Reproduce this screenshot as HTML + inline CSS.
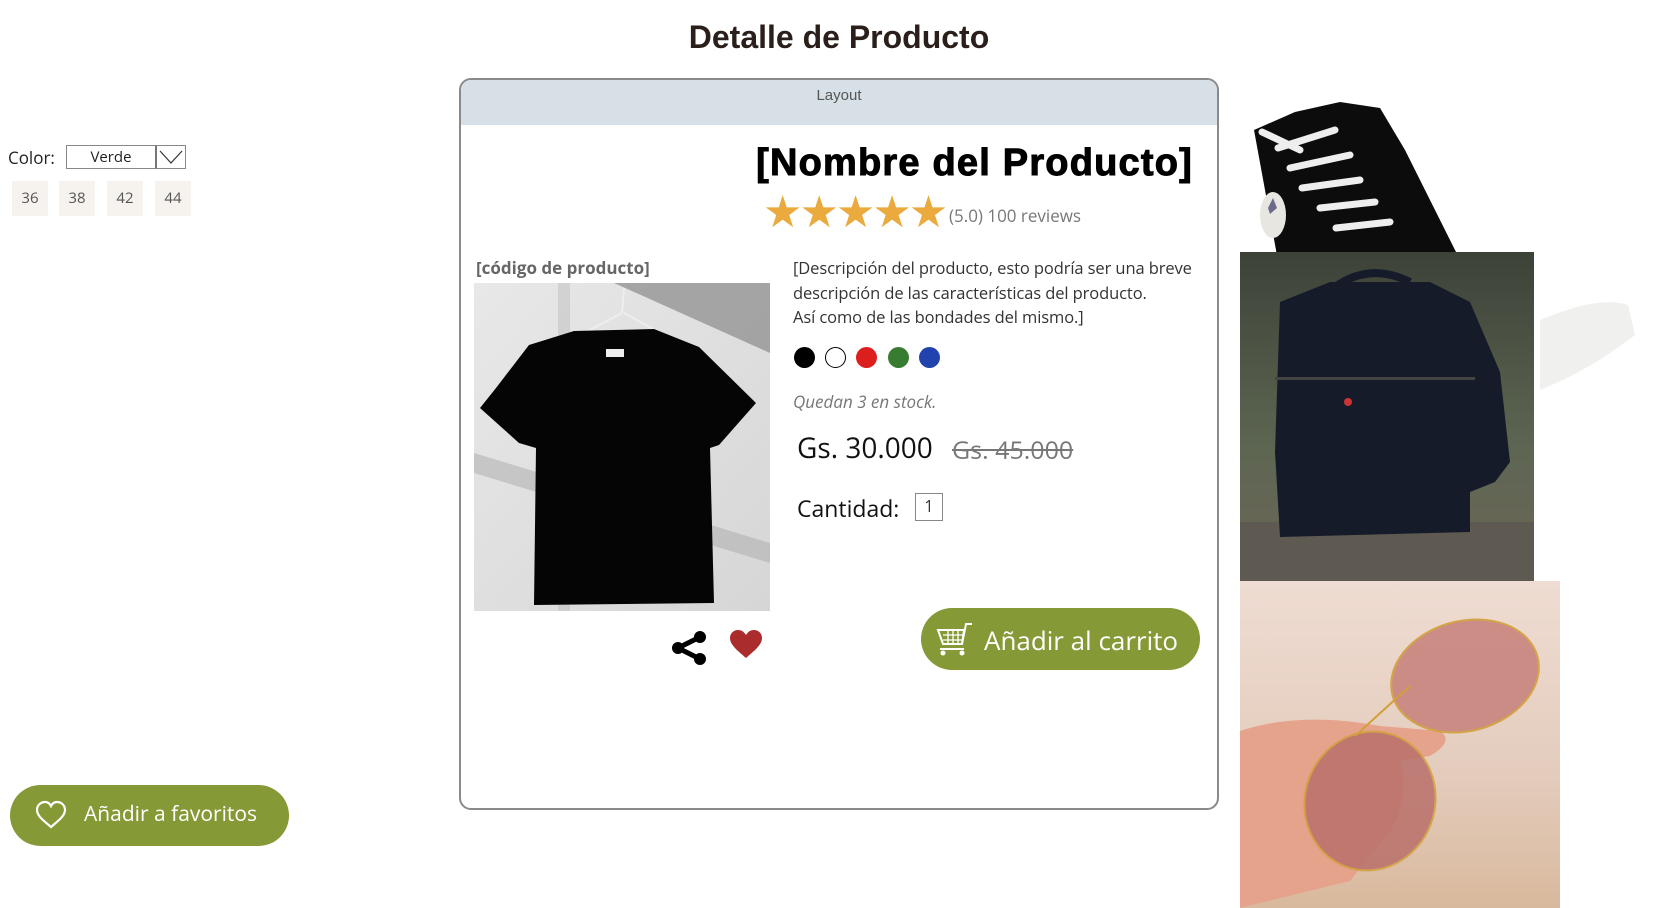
<!DOCTYPE html>
<html><head><meta charset="utf-8"><style>
*{margin:0;padding:0;box-sizing:border-box}
body{width:1663px;height:908px;background:#fff;position:relative;overflow:hidden;font-family:"Open Sans","Liberation Sans",sans-serif;color:#222}
.a{position:absolute;white-space:nowrap}
</style></head><body>
<div class="a" style="left:0;width:1678px;top:19px;text-align:center;font:bold 32px 'Liberation Sans',sans-serif;color:#2a1f1a">Detalle de Producto</div>

<div class="a" style="left:8px;top:146px;font-size:17px;color:#222">Color:</div>
<div class="a" style="left:66px;top:145px;width:120px;height:24px;border:1px solid #888;background:#fff"></div>
<div class="a" style="left:66px;top:147px;width:90px;text-align:center;font-size:15px;color:#222">Verde</div>
<div class="a" style="left:155px;top:145px;width:31px;height:24px;border:1px solid #888;border-left:2px solid #777"></div>
<svg class="a" style="left:158px;top:148px" width="26" height="18"><path d="M2 3 L13 15 L24 3" fill="none" stroke="#333" stroke-width="1.2"/></svg>
<div class="a" style="left:12px;top:181px;width:36px;height:35px;background:#f6f3ef;font-size:15px;color:#555;text-align:center;line-height:35px">36</div>
<div class="a" style="left:59px;top:181px;width:36px;height:35px;background:#f6f3ef;font-size:15px;color:#555;text-align:center;line-height:35px">38</div>
<div class="a" style="left:107px;top:181px;width:36px;height:35px;background:#f6f3ef;font-size:15px;color:#555;text-align:center;line-height:35px">42</div>
<div class="a" style="left:155px;top:181px;width:36px;height:35px;background:#f6f3ef;font-size:15px;color:#555;text-align:center;line-height:35px">44</div>

<div class="a" style="left:10px;top:785px;width:279px;height:61px;border-radius:31px;background:#859a36"></div>
<svg class="a" style="left:34px;top:800px" width="34" height="30" viewBox="0 0 34 30"><path d="M17 27 C10 21 3 16 3 10 C3 5 7 2 11 2 C14 2 16 4 17 6 C18 4 20 2 23 2 C27 2 31 5 31 10 C31 16 24 21 17 27Z" fill="none" stroke="#fff" stroke-width="2.2"/></svg>
<div class="a" style="left:84px;top:800px;font-size:21px;color:#fff">Añadir a favoritos</div>

<div class="a" style="left:459px;top:78px;width:760px;height:732px;border:2px solid #8a8a8a;border-radius:12px;overflow:hidden">
 <div style="height:45px;background:#d7e0e6;text-align:center;font:15px 'Liberation Sans',sans-serif;color:#555;padding-top:7px">Layout</div>
</div>
<div class="a" style="right:470px;top:142px;font:900 38px 'Liberation Sans',sans-serif;color:#000;letter-spacing:1.2px;-webkit-text-stroke:1px #000">[Nombre del Producto]</div>
<div class="a" style="left:763px;top:188px;font-size:44px;color:#eaaa3e;letter-spacing:-3px;line-height:44px">★★★★★</div>
<div class="a" style="left:949px;top:204px;font-size:17px;color:#777">(5.0) 100 reviews</div>
<div class="a" style="left:476px;top:256px;font-size:17px;font-weight:bold;color:#666">[código de producto]</div>

<svg class="a" style="left:474px;top:283px" width="296" height="328" viewBox="0 0 296 328">
<defs><linearGradient id="w" x1="0" y1="0" x2="1" y2="1"><stop offset="0" stop-color="#e8e8e8"/><stop offset="1" stop-color="#d6d6d6"/></linearGradient></defs>
<rect width="296" height="328" fill="url(#w)"/>
<polygon points="140,0 296,0 296,70" fill="#8a8a8a" opacity=".7"/>
<rect x="84" y="0" width="12" height="328" fill="#c4c4c4" opacity=".6"/>
<polygon points="0,170 296,260 296,280 0,190" fill="#aaa" opacity=".5"/>
<path d="M110 50 L148 30 L150 5 M150 30 L186 50" stroke="#eee" stroke-width="2" fill="none"/>
<polygon points="55,62 100,48 180,46 225,64 282,120 245,162 236,165 240,320 60,322 62,165 45,160 6,125 22,105" fill="#050505"/>
<rect x="132" y="66" width="18" height="8" fill="#eee"/>
</svg>

<div class="a" style="left:793px;top:256px;font-size:16.5px;line-height:24.5px;color:#333;white-space:normal;width:420px;letter-spacing:-0.1px">[Descripción del producto, esto podría ser una breve descripción de las características del producto.<br>Así como de las bondades del mismo.]</div>
<div class="a" style="left:794px;top:347px;width:21px;height:21px;border-radius:50%;background:#000"></div>
<div class="a" style="left:825px;top:347px;width:21px;height:21px;border-radius:50%;border:1.5px solid #000"></div>
<div class="a" style="left:856px;top:347px;width:21px;height:21px;border-radius:50%;background:#dd1e1e"></div>
<div class="a" style="left:888px;top:347px;width:21px;height:21px;border-radius:50%;background:#377c30"></div>
<div class="a" style="left:919px;top:347px;width:21px;height:21px;border-radius:50%;background:#2143ad"></div>
<div class="a" style="left:793px;top:390px;font-size:17px;font-style:italic;color:#777">Quedan 3 en stock.</div>
<div class="a" style="left:797px;top:429px;font-size:28px;color:#111">Gs. 30.000</div>
<div class="a" style="left:952px;top:433px;font-size:25px;color:#777;text-decoration:line-through">Gs. 45.000</div>
<div class="a" style="left:797px;top:492px;font-size:23px;color:#111">Cantidad:</div>
<div class="a" style="left:915px;top:493px;width:28px;height:28px;border:1.5px solid #888;font-size:16px;text-align:center;line-height:25px;color:#333">1</div>

<svg class="a" style="left:670px;top:630px" width="38" height="36" viewBox="0 0 38 36"><path d="M30 7 L8 18 L30 29" stroke="#000" stroke-width="5" fill="none"/><circle cx="30" cy="7" r="6" fill="#000"/><circle cx="8" cy="18" r="6" fill="#000"/><circle cx="30" cy="29" r="6" fill="#000"/></svg>
<svg class="a" style="left:729px;top:629px" width="34" height="30" viewBox="0 0 34 30"><path d="M17 29 C9 22 1 16 1 9 C1 4 5 1 9 1 C13 1 15 3 17 6 C19 3 21 1 25 1 C29 1 33 4 33 9 C33 16 25 22 17 29Z" fill="#ab2c2c"/></svg>

<div class="a" style="left:921px;top:608px;width:279px;height:62px;border-radius:31px;background:#859a36"></div>
<svg class="a" style="left:936px;top:620px" width="38" height="38" viewBox="0 0 38 38"><path d="M2 10 H28 L26 24 H7 Z" fill="none" stroke="#fff" stroke-width="2"/><path d="M7 15 H27 M7 20 H26 M12 10 V24 M17 10 V24 M22 10 V24" stroke="#fff" stroke-width="1.3"/><path d="M26 24 L30 4 H36 M4 29 H28" stroke="#fff" stroke-width="2" fill="none"/><circle cx="7" cy="33" r="2.5" fill="#fff"/><circle cx="26" cy="33" r="2.5" fill="#fff"/></svg>
<div class="a" style="left:984px;top:622px;font-size:26px;color:#fff">Añadir al carrito</div>

<svg class="a" style="left:1240px;top:90px" width="400" height="318" viewBox="0 0 400 318">
<path d="M14 40 L55 22 L100 12 L140 18 L165 60 L190 110 L215 160 L235 200 L40 200 L36 160 Z" fill="#0c0c0c"/>
<path d="M22 42 L60 60 M38 58 L95 40 M50 78 L110 65 M62 98 L120 90 M80 118 L135 112 M96 138 L150 132" stroke="#eee" stroke-width="7" fill="none" stroke-linecap="round"/>
<ellipse cx="33" cy="125" rx="13" ry="23" fill="#e8e6e0"/>
<path d="M28 118 L33 108 L37 118 L30 124 Z" fill="#6d6b8a"/>
<path d="M300 230 Q360 205 388 215 L395 245 Q350 280 300 300 Z" fill="#f0f0ee"/>
</svg>
<svg class="a" style="left:1240px;top:252px" width="294" height="329" viewBox="0 0 294 329">
<defs><linearGradient id="bg" x1="0" y1="0" x2="0" y2="1"><stop offset="0" stop-color="#3d4238"/><stop offset=".6" stop-color="#5d6652"/><stop offset="1" stop-color="#6e6558"/></linearGradient></defs>
<rect width="294" height="329" fill="url(#bg)"/>
<rect x="0" y="270" width="294" height="59" fill="#5e5a52"/>
<path d="M40 50 L90 30 L190 30 L230 50 L260 120 L270 210 L255 230 L230 240 L230 280 L40 285 L35 200 Z" fill="#161b2a"/>
<path d="M95 35 Q130 10 170 30" stroke="#161b2a" stroke-width="8" fill="none"/>
<rect x="35" y="125" width="200" height="3" fill="#444"/>
<circle cx="108" cy="150" r="4" fill="#c33"/>
</svg>
<svg class="a" style="left:1240px;top:581px" width="320" height="327" viewBox="0 0 320 327">
<defs><linearGradient id="sk" x1="0" y1="0" x2="0" y2="1"><stop offset="0" stop-color="#efdcd2"/><stop offset=".6" stop-color="#e3ccbc"/><stop offset="1" stop-color="#d9b99d"/></linearGradient></defs>
<rect width="320" height="327" fill="url(#sk)"/>
<path d="M0 150 Q60 130 140 145 L200 150 Q215 160 190 175 L160 180 Q170 220 150 250 L110 300 L0 327 Z" fill="#e6a38b"/>
<ellipse cx="225" cy="95" rx="75" ry="55" transform="rotate(-15 225 95)" fill="#c8857f" stroke="#d2a03a" stroke-width="2" opacity=".9"/>
<ellipse cx="130" cy="220" rx="65" ry="70" transform="rotate(20 130 220)" fill="#b9706b" stroke="#d2a03a" stroke-width="2" opacity=".85"/>
<path d="M115 155 L170 105" stroke="#d2a03a" stroke-width="2"/>
</svg>
</body></html>
